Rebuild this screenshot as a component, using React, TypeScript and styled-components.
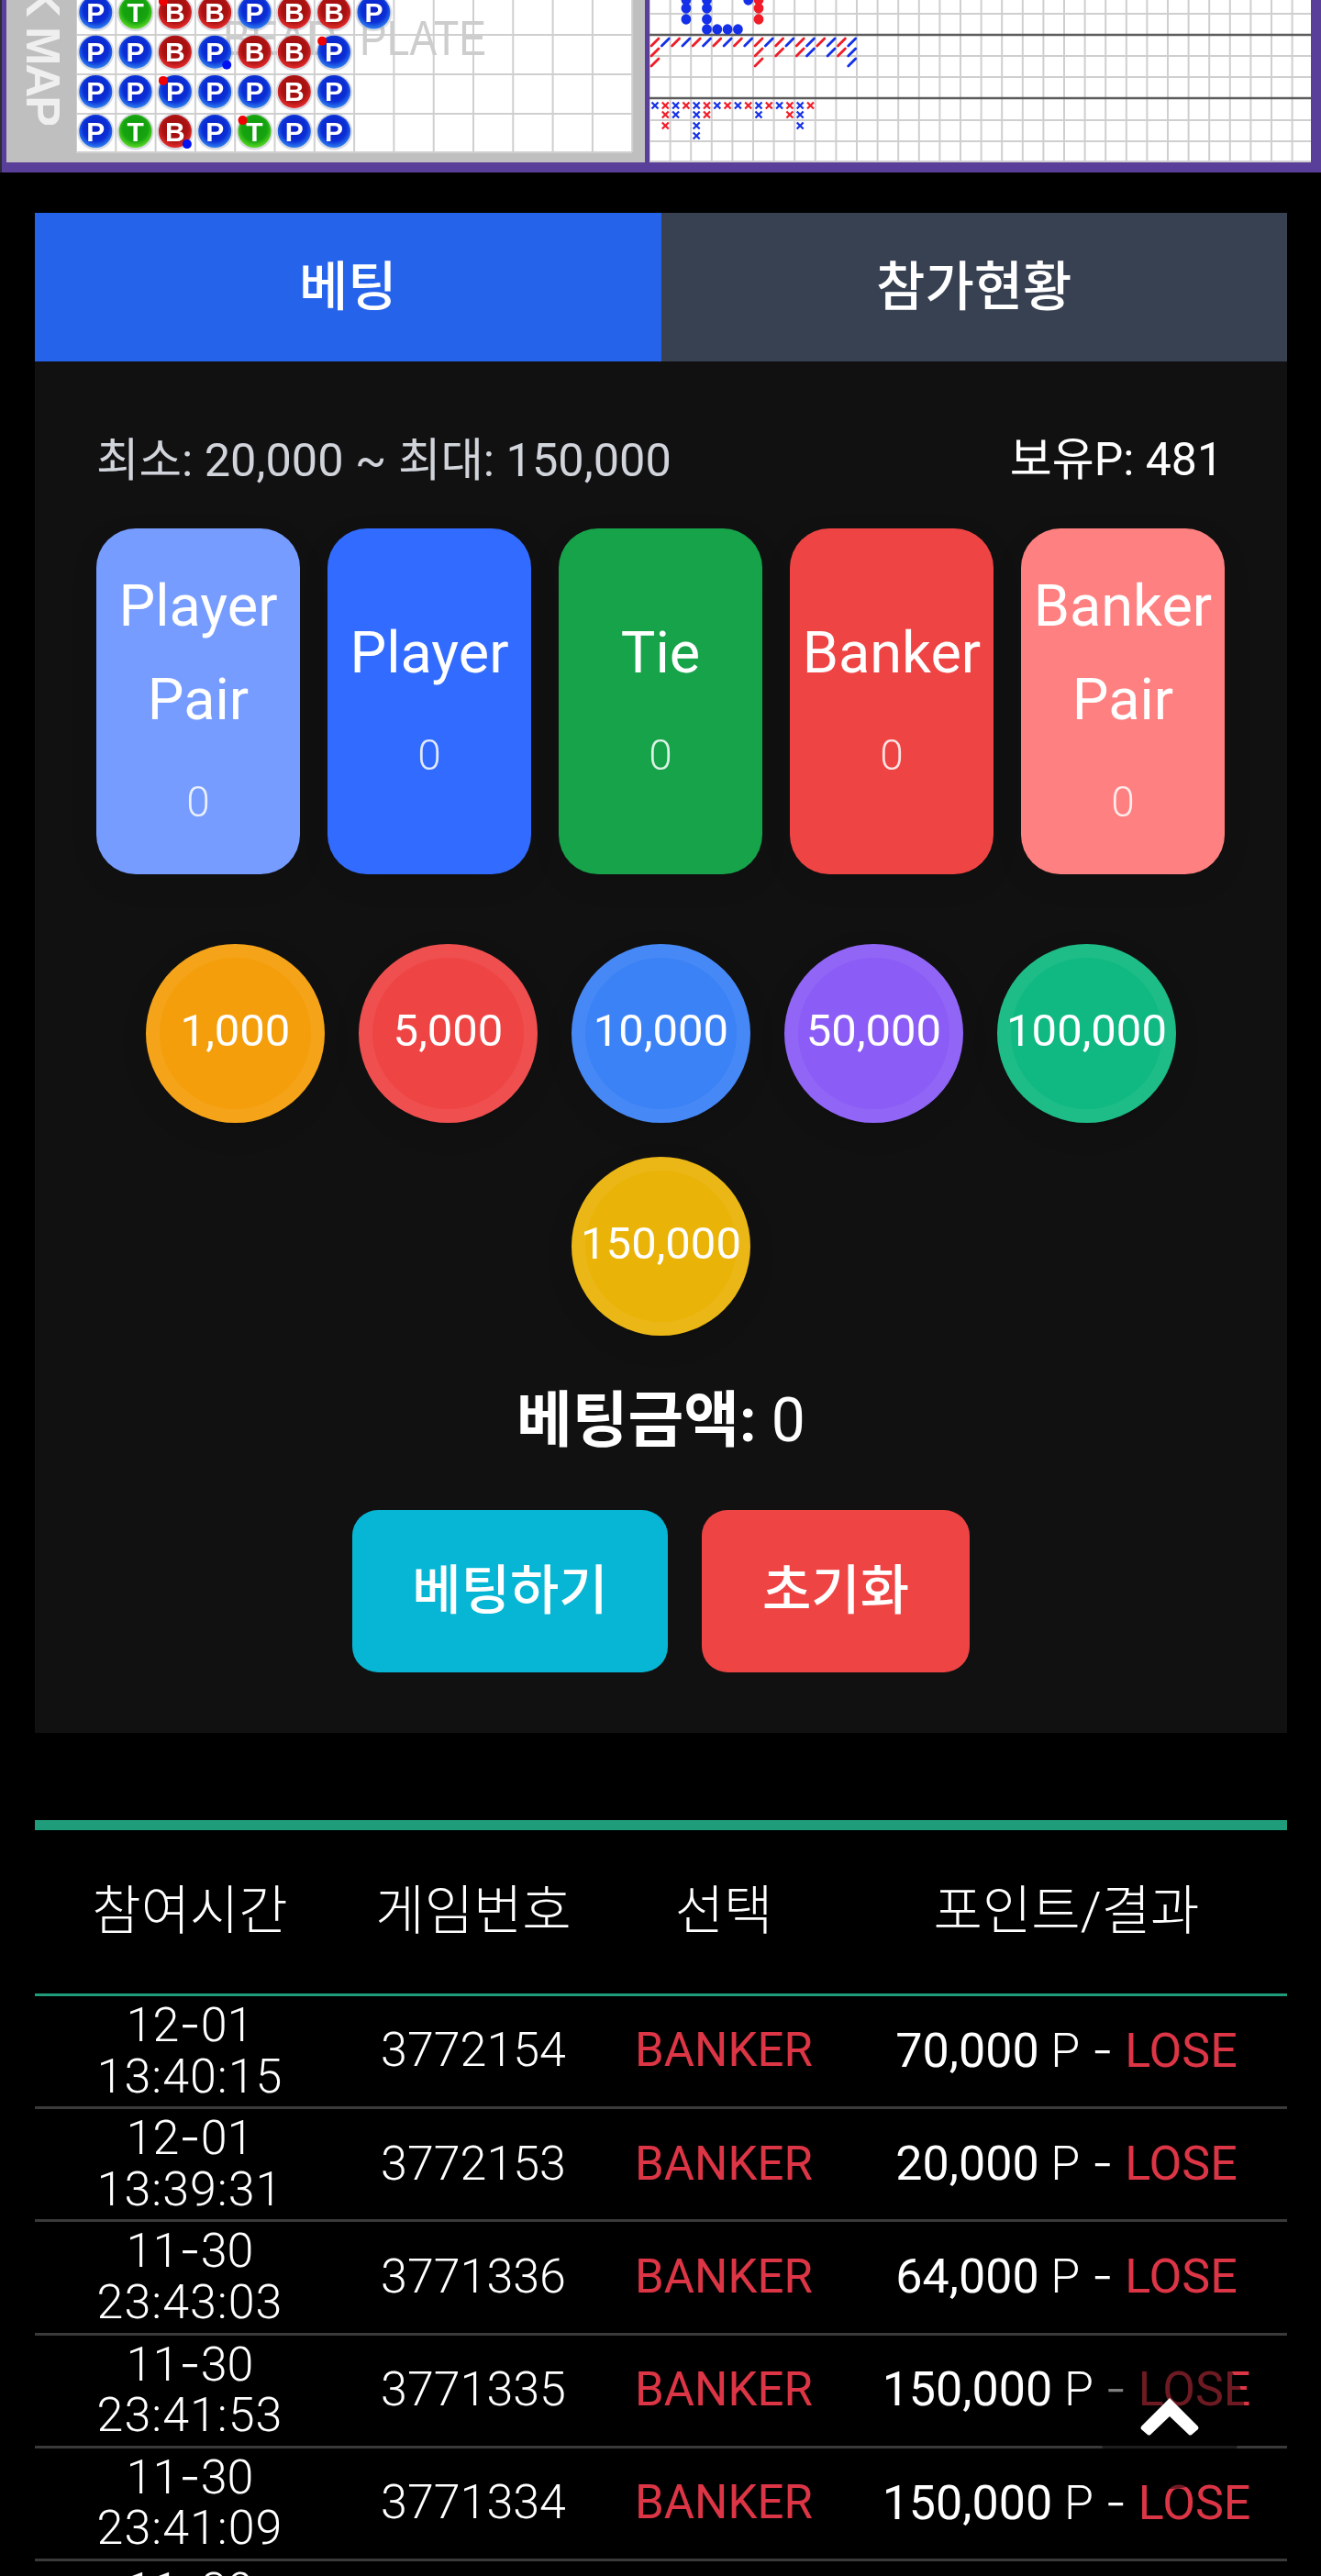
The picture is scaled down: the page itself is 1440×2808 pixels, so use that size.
import React from 'react';
import styled, {createGlobalStyle} from 'styled-components';

const GlobalStyle = createGlobalStyle`
  html, body {
    margin: 0;
    height: 2808px;
    overflow: hidden;
    background: #000;
  }
  body {
    font-family: Roboto, "Noto Sans CJK KR", sans-serif;
    color: #fff;
  }
  * {
    box-sizing: border-box;
  }
`;

const Page = styled.div`
  height: 2808px;
  overflow: hidden;
`;

/* ---------- road map strip ---------- */

const Board = styled.div`
  display: flex;
  gap: 5px;
  height: 188px;
  padding: 0 11px 11px 5px;
  border-left: 2px solid #2b2b35;
  background: #5a3f9a;
`;
const BeadPanel = styled.div`
  display: flex;
  width: 696px;
  background: #bfbfbf;
`;
const MapLabel = styled.div`
  flex: none;
  display: flex;
  justify-content: flex-end;
  width: 76px;
  height: 136px;
  overflow: hidden;
  writing-mode: vertical-rl;
  font-family: 'Liberation Sans', sans-serif;
  font-size: 51px;
  font-weight: 700;
  letter-spacing: -2px;
  line-height: 73px;
  color: #efefef;
  white-space: nowrap;
`;
const MapSvg = styled.svg`
  display: block;
  filter: blur(0.45px);
`;

const BALL_ROWS = ['PTBBPBBP', 'PPBPBBP', 'PPPPPBP', 'PTBPTPP'];
const RED_DOTS = ['0-2', '1-6', '2-2', '3-4'];
const BLUE_DOTS = ['1-3', '3-2'];
const CELL = 43.3;

function BeadRoad() {
  return (
    <MapSvg width="620" height="177" viewBox="0 0 620 177">
      <defs>
        <radialGradient id="ballP" cx="50%" cy="42%" r="58%">
          <stop offset="0%" stopColor="#0a1ec8" />
          <stop offset="66%" stopColor="#0b2fd6" />
          <stop offset="96%" stopColor="#2a78ee" />
        </radialGradient>
        <radialGradient id="ballB" cx="50%" cy="42%" r="58%">
          <stop offset="0%" stopColor="#9c0c0c" />
          <stop offset="66%" stopColor="#ac1212" />
          <stop offset="96%" stopColor="#e22a2a" />
        </radialGradient>
        <radialGradient id="ballT" cx="50%" cy="42%" r="58%">
          <stop offset="0%" stopColor="#109a0c" />
          <stop offset="66%" stopColor="#16a410" />
          <stop offset="96%" stopColor="#55d422" />
        </radialGradient>
      </defs>
      <rect width="606" height="166" fill="#fff" />
      {Array.from({length: 15}, (_, k) => (
        <line key={k} x1={k * CELL} x2={k * CELL} y1="0" y2="166" stroke="#cfcfcf" strokeWidth="2" />
      ))}
      {[38, 81, 124, 166].map((y) => (
        <line key={y} x1="0" x2="606" y1={y} y2={y} stroke="#cfcfcf" strokeWidth="2" />
      ))}
      <g fontFamily="'Liberation Sans', sans-serif" fontSize="53" fill="#cdcdcd">
        <text x="160" y="60" textLength="124" lengthAdjust="spacingAndGlyphs">BEAD</text>
        <text x="309" y="60" textLength="138" lengthAdjust="spacingAndGlyphs">PLATE</text>
      </g>
      {BALL_ROWS.map((row, r) =>
        row.split('').map((kind, c) => {
          const cx = 21.3 + c * CELL;
          const cy = 13.5 + r * 43.2;
          return (
            <g key={`${r}-${c}`}>
              <circle cx={cx} cy={cy + 0.5} r="20" fill="#aab0c0" opacity="0.45" />
              <circle cx={cx} cy={cy} r="18" fill={`url(#ball${kind})`} />
              <text
                x={cx}
                y={cy + 10.5}
                textAnchor="middle"
                fontFamily="'Liberation Sans', sans-serif"
                fontSize="30"
                fontWeight="700"
                fill="#fff"
              >
                {kind}
              </text>
              {RED_DOTS.includes(`${r}-${c}`) && <circle cx={cx - 13} cy={cy - 12} r="5" fill="#f00000" />}
              {BLUE_DOTS.includes(`${r}-${c}`) && <circle cx={cx + 13} cy={cy + 14} r="5" fill="#0010f0" />}
            </g>
          );
        }),
      )}
    </MapSvg>
  );
}

const SUB = 11.3;
const subX = (i: number) => 6 + SUB * i;
const BLUE = '#1430e8';
const RED = '#f01c28';

const BIG_DOTS: [number, number, string][] = [
  [3, 0, BLUE], [3, 9, BLUE], [3, 21, BLUE],
  [5, 0, BLUE], [5, 9, BLUE], [5, 21, BLUE], [5, 32, BLUE],
  [6, 32, BLUE], [7, 32, BLUE], [8, 32, BLUE], [9, 0, BLUE],
  [10, 0, RED], [10, 9, RED], [10, 21, RED],
];
const SLASHES: [number, number, string][] = [
  ...Array.from({length: 20}, (_, i): [number, number, string] => [i, 46, i % 2 ? BLUE : RED]),
  [0, 57, RED], [10, 57, RED], [12, 57, RED], [14, 57, RED], [15, 57, BLUE],
  [17, 57, BLUE], [18, 57, RED], [19, 57, BLUE],
  [0, 68, RED], [10, 68, RED], [19, 68, BLUE],
];
const CROSSES: [number, number, string][] = [
  ...Array.from({length: 16}, (_, i): [number, number, string] => [i, 115, i % 2 ? RED : BLUE]),
  [1, 125, RED], [2, 125, BLUE], [4, 125, BLUE], [5, 125, RED],
  [10, 125, BLUE], [13, 125, RED], [14, 125, BLUE],
  [1, 137, RED], [4, 137, BLUE], [14, 137, BLUE],
  [4, 148, BLUE],
];

function BigRoad() {
  return (
    <MapSvg width="721" height="177" viewBox="0 0 721 177">
      <rect width="721" height="177" fill="#fff" />
      {Array.from({length: 33}, (_, k) => (
        <line key={k} x1={k * 22.6} x2={k * 22.6} y1="0" y2="177" stroke="#cfcfcf" strokeWidth="2" />
      ))}
      {[15, 61, 84, 131, 154, 176].map((y) => (
        <line key={y} x1="0" x2="721" y1={y} y2={y} stroke="#cfcfcf" strokeWidth="2" />
      ))}
      {[38, 107].map((y) => (
        <line key={y} x1="0" x2="721" y1={y} y2={y} stroke="#5c5c5c" strokeWidth="2.5" />
      ))}
      {BIG_DOTS.map(([i, y, color]) => (
        <ellipse key={`${i}-${y}`} cx={subX(i)} cy={y} rx="5.4" ry="5.8" fill={color} />
      ))}
      {SLASHES.map(([i, y, color]) => (
        <line
          key={`${i}-${y}`}
          x1={subX(i) - 4}
          y1={y + 4}
          x2={subX(i) + 4}
          y2={y - 4}
          stroke={color}
          strokeWidth="2.8"
          strokeLinecap="round"
        />
      ))}
      {CROSSES.map(([i, y, color]) => (
        <path
          key={`${i}-${y}`}
          d={`M${subX(i) - 3.5} ${y - 3.5}L${subX(i) + 3.5} ${y + 3.5}M${subX(i) + 3.5} ${y - 3.5}L${subX(i) - 3.5} ${y + 3.5}`}
          stroke={color}
          strokeWidth="2.2"
          fill="none"
        />
      ))}
    </MapSvg>
  );
}

/* ---------- betting panel ---------- */

const Content = styled.div`
  padding: 44px 37px 0 38px;
`;
const Tabs = styled.div`
  display: flex;
`;
const Tab = styled.button<{$active?: boolean}>`
  flex: 1;
  height: 162px;
  padding: 0 0 10px;
  border: none;
  background: ${(props) => (props.$active ? '#2563eb' : '#374151')};
  color: #fff;
  font-family: inherit;
  font-size: 58px;
  font-weight: 500;
`;
const BetPanel = styled.section`
  padding: 70px 67px 66px;
  background: #111;
`;
const LimitRow = styled.div`
  display: flex;
  justify-content: space-between;
  font-size: 50.5px;
  line-height: 75px;
  color: #d1d5db;
`;
const Balance = styled.span`
  color: #fff;
  font-size: 50px;
  padding-right: 3px;
`;
const Cards = styled.div`
  display: grid;
  grid-template-columns: repeat(5, 222px);
  gap: 30px;
  margin-top: 37px;
`;
const Card = styled.button<{$color: string}>`
  display: flex;
  flex-direction: column;
  align-items: center;
  justify-content: center;
  height: 377px;
  padding: 0 0 18px;
  border: none;
  border-radius: 43px;
  background: ${(props) => props.$color};
  box-shadow: 0 10px 30px rgba(0, 0, 0, 0.1);
  color: #fff;
  font-family: inherit;
`;
const CardLabel = styled.span`
  font-size: 63px;
  line-height: 102px;
  white-space: pre-line;
`;
const CardValue = styled.span`
  margin-top: 33px;
  font-size: 46px;
  line-height: 54px;
  font-weight: 300;
  opacity: 0.85;
`;
const Chips = styled.div`
  display: flex;
  flex-wrap: wrap;
  justify-content: center;
  gap: 37px;
  margin-top: 76px;
`;
const Chip = styled.button<{$color: string}>`
  width: 195px;
  height: 195px;
  padding: 0 0 6px;
  border: 15px solid rgba(255, 255, 255, 0.06);
  border-radius: 50%;
  background: ${(props) => props.$color};
  box-shadow: 0 10px 30px rgba(0, 0, 0, 0.1);
  color: #fff;
  font-family: inherit;
  font-size: 49px;
  font-weight: 450;
  display: flex;
  align-items: center;
  justify-content: center;
  white-space: nowrap;
`;
const Total = styled.div`
  margin-top: 45px;
  text-align: center;
  font-size: 66px;
  line-height: 96px;
`;
const TotalLabel = styled.span`
  font-weight: 700;
`;
const Actions = styled.div`
  display: flex;
  justify-content: center;
  gap: 37px;
  margin-top: 49px;
`;
const ActionButton = styled.button<{$color: string; $width: number}>`
  width: ${(props) => props.$width}px;
  height: 177px;
  padding: 0 0 12px;
  border: none;
  border-radius: 28px;
  background: ${(props) => props.$color};
  color: #fff;
  font-family: inherit;
  font-size: 58px;
  font-weight: 500;
`;

/* ---------- history table ---------- */

const HistoryTable = styled.table`
  width: 100%;
  margin-top: 95px;
  border-collapse: separate;
  border-spacing: 0;
  border-top: 11px solid #1f9d7b;
  table-layout: fixed;
`;
const HeadCell = styled.th<{$width: number}>`
  width: ${(props) => props.$width}px;
  height: 181px;
  padding: 0 0 12px;
  border-bottom: 3px solid #1f9d7b;
  font-size: 58px;
  font-weight: 300;
`;
const Cell = styled.td`
  height: 123.2px;
  padding: 0 0 2px;
  border-bottom: 3px solid #3a3a3a;
  text-align: center;
  font-size: 52px;
  line-height: 55.5px;
  font-weight: 300;
  color: #fff;
`;
const Pick = styled(Cell)`
  color: #dc3545;
  font-size: 51px;
  font-weight: 400;
`;
const Time = styled.span`
  letter-spacing: 1px;
`;
const Dash = styled.span`
  font-family: Inter, Roboto, sans-serif;
`;
const Points = styled.span`
  font-weight: 400;
`;
const Lose = styled.span`
  color: #dc3545;
  font-weight: 400;
`;

const ScrollTop = styled.button`
  position: fixed;
  right: 83px;
  bottom: 95px;
  width: 164px;
  height: 164px;
  padding: 6px 0 0;
  border: none;
  border-radius: 50%;
  background: rgba(0, 0, 0, 0.5);
  display: flex;
  align-items: center;
  justify-content: center;
`;

const BETS = [
  {label: 'Player\nPair', color: '#769cff'},
  {label: 'Player', color: '#326bff'},
  {label: 'Tie', color: '#16a34a'},
  {label: 'Banker', color: '#ef4444'},
  {label: 'Banker\nPair', color: '#ff8080'},
];
const CHIPS = [
  {value: '1,000', color: '#f59e0b'},
  {value: '5,000', color: '#ef4444'},
  {value: '10,000', color: '#3b82f6'},
  {value: '50,000', color: '#8b5cf6'},
  {value: '100,000', color: '#10b981'},
  {value: '150,000', color: '#eab308'},
];
const HISTORY = [
  {month: '12', day: '01', time: '13:40:15', game: '3772154', points: '70,000'},
  {month: '12', day: '01', time: '13:39:31', game: '3772153', points: '20,000'},
  {month: '11', day: '30', time: '23:43:03', game: '3771336', points: '64,000'},
  {month: '11', day: '30', time: '23:41:53', game: '3771335', points: '150,000'},
  {month: '11', day: '30', time: '23:41:09', game: '3771334', points: '150,000'},
  {month: '11', day: '30', time: '23:40:25', game: '3771333', points: '150,000'},
];

export default function App() {
  return (
    <Page>
      <GlobalStyle />
      <Board>
        <BeadPanel>
          <MapLabel>K MAP</MapLabel>
          <BeadRoad />
        </BeadPanel>
        <BigRoad />
      </Board>
      <Content>
        <Tabs>
          <Tab $active>베팅</Tab>
          <Tab>참가현황</Tab>
        </Tabs>
        <BetPanel>
          <LimitRow>
            <span>최소: 20,000 ~ 최대: 150,000</span>
            <Balance>보유P: 481</Balance>
          </LimitRow>
          <Cards>
            {BETS.map((bet) => (
              <Card key={bet.label} $color={bet.color}>
                <CardLabel>{bet.label}</CardLabel>
                <CardValue>0</CardValue>
              </Card>
            ))}
          </Cards>
          <Chips>
            {CHIPS.map((chip) => (
              <Chip key={chip.value} $color={chip.color}>
                {chip.value}
              </Chip>
            ))}
          </Chips>
          <Total>
            <TotalLabel>베팅금액:</TotalLabel> 0
          </Total>
          <Actions>
            <ActionButton $color="#06b6d4" $width={344}>
              베팅하기
            </ActionButton>
            <ActionButton $color="#ef4444" $width={292}>
              초기화
            </ActionButton>
          </Actions>
        </BetPanel>
        <HistoryTable>
          <thead>
            <tr>
              <HeadCell $width={338}>참여시간</HeadCell>
              <HeadCell $width={280}>게임번호</HeadCell>
              <HeadCell $width={266}>선택</HeadCell>
              <HeadCell $width={481}>포인트/결과</HeadCell>
            </tr>
          </thead>
          <tbody>
            {HISTORY.map((row) => (
              <tr key={row.game}>
                <Cell>
                  {row.month}
                  <Dash>-</Dash>
                  {row.day}
                  <br />
                  <Time>{row.time}</Time>
                </Cell>
                <Cell>{row.game}</Cell>
                <Pick>BANKER</Pick>
                <Cell>
                  <Points>{row.points}</Points> P <Dash>-</Dash> <Lose>LOSE</Lose>
                </Cell>
              </tr>
            ))}
          </tbody>
        </HistoryTable>
      </Content>
      <ScrollTop aria-label="top">
        <svg width="64" height="41" viewBox="0 0 64 41">
          <path
            d="M32 0L63 31Q64 33 63 34L56 40Q54 41 53 40L32 20L11 40Q10 41 8 40L1 34Q0 33 1 31Z"
            fill="#fff"
          />
        </svg>
      </ScrollTop>
    </Page>
  );
}
